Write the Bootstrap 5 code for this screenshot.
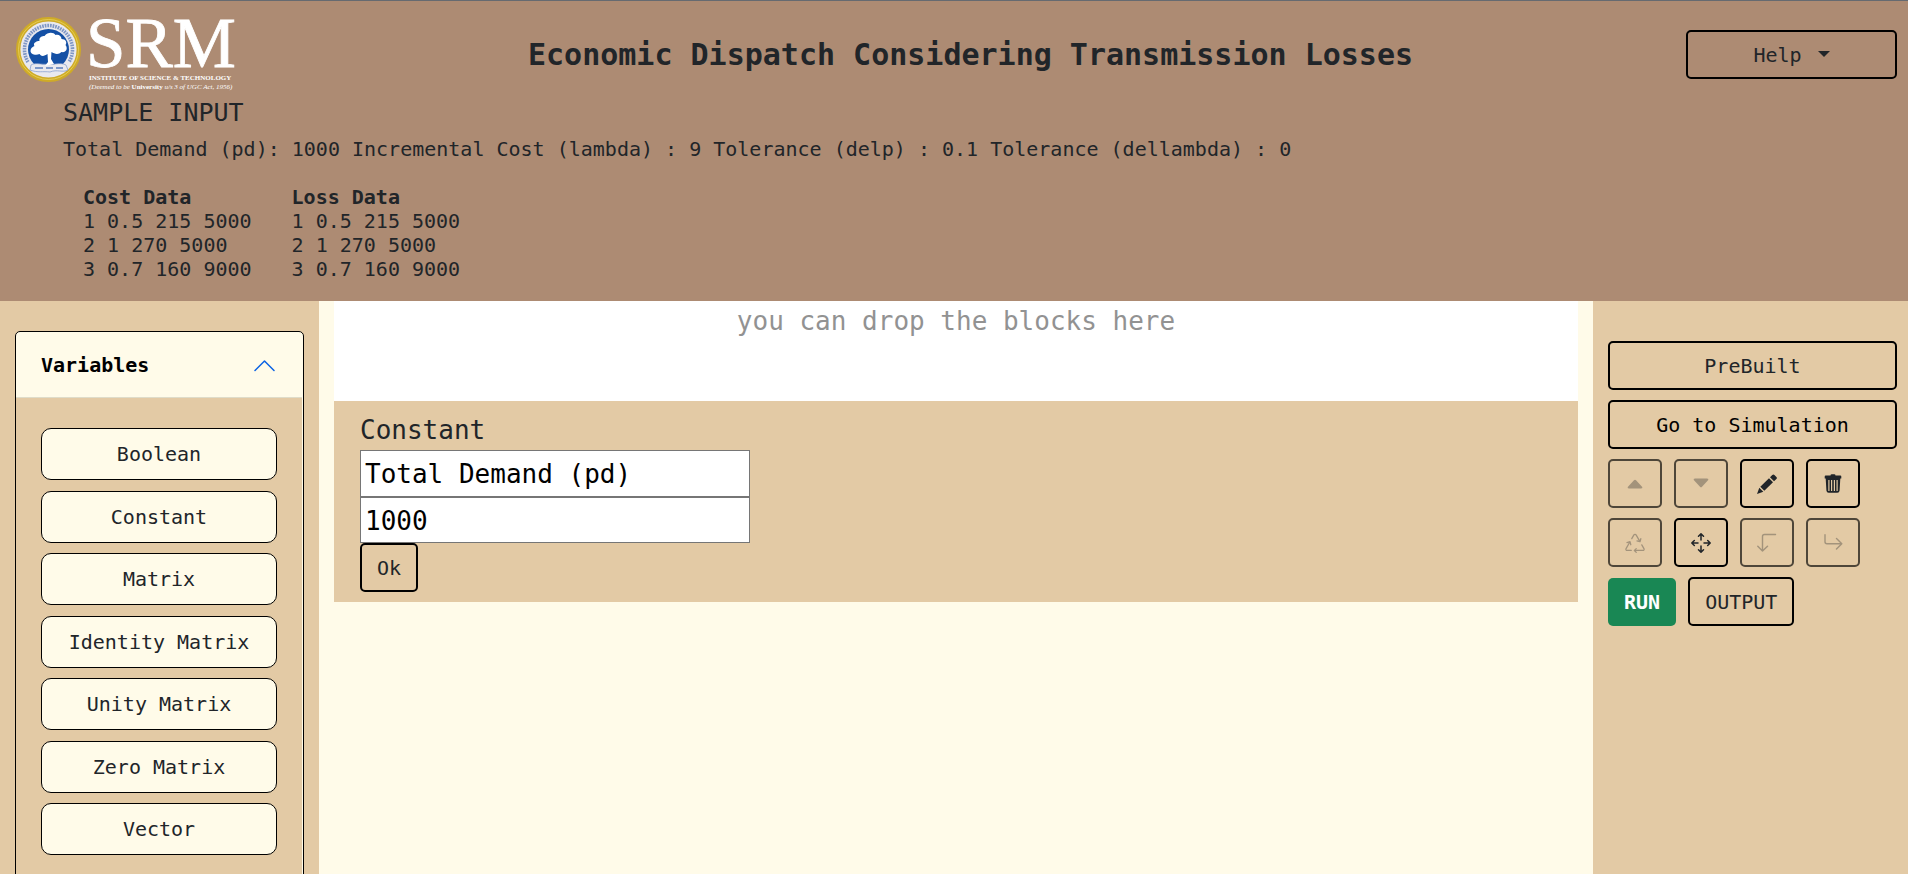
<!DOCTYPE html>
<html lang="en">
<head>
<meta charset="utf-8">
<meta name="viewport" content="width=device-width, initial-scale=1">
<title>Economic Dispatch Considering Transmission Losses</title>
<link href="https://cdn.jsdelivr.net/npm/bootstrap@5.3.0/dist/css/bootstrap.min.css" rel="stylesheet">
<style>
:root { --brown: #ad8b73; --sand: #e3caa5; --cream: #fffbe9; }
body { font-family: "DejaVu Sans Mono", monospace; font-size: 20px; line-height: 30px; background: var(--cream); }
.site-head { background: var(--brown); border-top: 1px solid #666a70; padding-bottom: 20px; }
.head-bar { padding: 15px 11px 0 15px; }
.brand-logo { width: 240px; height: 78px; flex: none; overflow: visible; }
.page-title { font-size: 30px; line-height: 36px; font-weight: 700; padding-top: 21px; }
.btn { --bs-btn-font-size: 20px; --bs-btn-line-height: 30px; --bs-btn-border-radius: 5px; padding: 8px 15px 7px; }
.btn-line { border: 2px solid #000; color: #212529; }
.btn-line:disabled { border-color: #000; color: #212529; opacity: .65; }
.btn-line:disabled svg { opacity: .5; }
.btn-line:hover { border-color: #000; background: var(--cream); }
.btn-run { border: 0; padding: 9px 16px; font-weight: 700; }
.btn-help { width: 211px; margin-top: 14px; }
.btn-help::after { margin-left: 16px; }
.btn-tool { width: 54px; height: 49px; padding: 0; }
.btn-tool svg { width: 20px; height: 20px; display: block; margin: auto; }
.tool-stack { gap: 10px; }
.tool-row { gap: 10px 12px; }
.sample { padding-left: 63px; line-height: 24px; }
.sample h2 { font-size: 25px; line-height: 30px; font-weight: 400; margin: 4px 0 9px; }
.sample p { margin: 0 0 24px; }
.sample th, .sample td { padding: 0 20px; }
.workspace { display: grid; grid-template-columns: 319px minmax(0, 1fr) 315px; }
.side-left { background: var(--sand); padding: 30px 15px 0; }
.side-right { background: var(--sand); padding: 40px 11px 0 15px; }
.var-box { border: 1px solid #000; border-radius: 5px; background: var(--cream); height: 100%; padding-right: 1px; }
.var-head { border: 0; border-bottom: 1px solid #dfdcc9; border-radius: 5px 5px 0 0; background: transparent; padding: 18px 25px 17px; font-weight: 700; color: #000; }
.var-list { background: var(--sand); padding: 30px 25px; min-height: 600px; }
.var-stack { min-height: 427px; }
.block-btn { height: 52px; flex: none; border: 1px solid #000; border-radius: 10px; background: var(--cream); color: #212529; }
.canvas { padding: 0 15px; }
.drop-zone { background: #fff; height: 100px; padding-top: 1px; font-size: 26px; line-height: 39px; color: #929292; }
.const-form { background: var(--sand); padding: 10px 26px; font-size: 26px; line-height: 39px; }
.const-form input { width: 390px; border: 1px solid #767676; padding: 4px 4px 3px; height: 47px; color: #000; background: #fff; }
.const-form input + input { height: 46px; }
</style>
</head>
<body class="vh-100 overflow-hidden d-flex flex-column">
<header class="site-head">
  <div class="head-bar d-flex align-items-start">
    <svg class="brand-logo" viewBox="15 16 240 78" role="img" aria-label="SRM Institute of Science and Technology">
      <circle cx="48.500" cy="49.500" r="31" fill="#e9e9ee"/>
      <circle cx="48.500" cy="49.500" r="30.300" fill="none" stroke="#cfab27" stroke-width="4.400"/>
      <circle cx="48.500" cy="49.500" r="30" fill="none" stroke="#ead460" stroke-width=".8"/>
      <path d="M28 62a24 24 0 1 1 41 0" fill="none" stroke="#7f97c6" stroke-width="3.600" stroke-dasharray="1.700 .9"/>
      <circle cx="48.500" cy="49.500" r="20.500" fill="#1450a5"/>
      <path d="M31 65c5-3 10 0 17-1 7 1 12-2 18 1l2 5c-5 3-11-1-18 2-7-1-12 1-20-2z" fill="#e9e9ee" stroke="#7d97c8" stroke-width=".7"/>
      <path d="M45 66l3-4-.5-8c-3 2-6 3-8 0-4 2-9 0-9-3s2-4 4-5c-2-3 2-5 5-5-1-4 3-5 5-5 3-4 9-4 11-1 3-1 6 1 6 4 4 0 6 3 4 6 3 4 0 8-4 7-3 3-7 2-10 0l-.5 7 3 5z" fill="#fff"/>
      <path d="M35 68h8m3 0h7m3 0h7" stroke="#5a7dbd" stroke-width="1.500"/>
      <g fill="#fff" font-family="Liberation Serif, serif">
        <text x="86" y="67" font-size="71" stroke="#fff" stroke-width=".8">SRM</text>
        <text x="89" y="80" font-size="7" font-weight="700">INSTITUTE OF SCIENCE &amp; TECHNOLOGY</text>
        <text x="89" y="89" font-size="7" font-style="italic">(Deemed to be <tspan font-weight="700" font-style="normal">University</tspan> u/s 3 of UGC Act, 1956)</text>
      </g>
    </svg>
    <h1 class="page-title flex-grow-1 text-center mb-0">Economic Dispatch Considering Transmission Losses</h1>
    <button class="btn btn-line btn-help dropdown-toggle" type="button" data-bs-toggle="dropdown">Help</button>
  </div>
  <section class="sample">
    <h2>SAMPLE INPUT</h2>
    <p>Total Demand (pd): 1000 Incremental Cost (lambda) : 9 Tolerance (delp) : 0.1 Tolerance (dellambda) : 0</p>
    <table>
      <thead><tr><th>Cost Data</th><th>Loss Data</th></tr></thead>
      <tbody>
        <tr><td>1 0.5 215 5000</td><td>1 0.5 215 5000</td></tr>
        <tr><td>2 1 270 5000</td><td>2 1 270 5000</td></tr>
        <tr><td>3 0.7 160 9000</td><td>3 0.7 160 9000</td></tr>
      </tbody>
    </table>
  </section>
</header>
<main class="workspace flex-grow-1 overflow-hidden">
  <aside class="side-left">
    <div class="var-box">
      <button class="var-head w-100 d-flex align-items-center justify-content-between" type="button" aria-expanded="true">Variables
        <svg width="25" height="25" viewBox="0 0 25 25" fill="none" stroke="#0c63e4" stroke-width="1.500" stroke-linecap="round" stroke-linejoin="round" aria-hidden="true"><path d="M3 17.500L12.500 8l9.500 9.500"/></svg>
      </button>
      <div class="var-list">
        <div class="var-stack d-flex flex-column justify-content-between">
          <button class="block-btn" type="button">Boolean</button>
          <button class="block-btn" type="button">Constant</button>
          <button class="block-btn" type="button">Matrix</button>
          <button class="block-btn" type="button">Identity Matrix</button>
          <button class="block-btn" type="button">Unity Matrix</button>
          <button class="block-btn" type="button">Zero Matrix</button>
          <button class="block-btn" type="button">Vector</button>
        </div>
      </div>
    </div>
  </aside>
  <section class="canvas">
    <div class="drop-zone text-center">you can drop the blocks here</div>
    <form class="const-form d-flex flex-column align-items-start">
      <label for="constName">Constant</label>
      <input id="constName" type="text" value="Total Demand (pd)">
      <input id="constValue" type="text" value="1000" aria-label="Value">
      <button class="btn btn-line" type="button">Ok</button>
    </form>
  </section>
  <aside class="side-right">
    <div class="tool-stack d-flex flex-column">
      <button class="btn btn-line" type="button">PreBuilt</button>
      <button class="btn btn-line text-black" type="button">Go to Simulation</button>
      <div class="tool-row d-flex flex-wrap">
        <button class="btn btn-line btn-tool" type="button" aria-label="Move up" disabled>
          <svg viewBox="0 0 20 20" fill="currentColor"><path d="M3 12.800L9 6.300q1-1.100 2 0l6 6.500q1 1.700-1 1.700H4q-2 0-1-1.700z"/></svg>
        </button>
        <button class="btn btn-line btn-tool" type="button" aria-label="Move down" disabled>
          <svg viewBox="0 0 20 20" fill="currentColor"><path d="M3 6.200l6 6.500q1 1.100 2 0l6-6.500q1-1.700-1-1.700H4q-2 0-1 1.700z"/></svg>
        </button>
        <button class="btn btn-line btn-tool" type="button" aria-label="Edit">
          <svg viewBox="0 0 20 20" fill="currentColor"><path d="M0 20l2.300-6.300 4 4zM3.300 12.700l8.700-8.500 4 4-8.700 8.500zM13 3.200L15.300 1q1.100-1 2.100 0l2 2q1 1 0 2.100L17 7.200z"/></svg>
        </button>
        <button class="btn btn-line btn-tool" type="button" aria-label="Delete">
          <svg viewBox="0 0 20 20" fill="currentColor" fill-rule="evenodd"><path d="M7.500 1.500q0-1.300 1.300-1.300h2.400q1.300 0 1.300 1.300h4.800q1 0 1 1v2h-1l-.7 12q-.2 2.300-2.300 2.300H5.700q-2.100 0-2.300-2.300l-.7-12h-1v-2q0-1 1-1zM5.300 6v11h1.200V6zm2.700 0v11h1.200V6zm2.800 0v11H12V6zm2.700 0v11h1.200V6z"/></svg>
        </button>
      </div>
      <div class="tool-row d-flex flex-wrap">
        <button class="btn btn-line btn-tool" type="button" aria-label="Recycle" disabled>
          <svg viewBox="0 0 16 16" fill="currentColor"><path d="M9.302 1.256a1.500 1.500 0 0 0-2.604 0l-1.704 2.980a.5.5 0 0 0 .869.497l1.703-2.981a.5.5 0 0 1 .868 0l2.540 4.444-1.256-.337a.5.5 0 1 0-.26.966l2.415.647a.5.5 0 0 0 .613-.353l.647-2.415a.5.5 0 1 0-.966-.259l-.333 1.242-2.532-4.431zM2.973 7.773l-1.255.337a.5.5 0 1 1-.26-.966l2.416-.647a.5.5 0 0 1 .612.353l.647 2.415a.5.5 0 0 1-.966.259l-.333-1.242-2.545 4.454a.5.5 0 0 0 .434.748H5a.5.5 0 0 1 0 1H1.723A1.500 1.500 0 0 1 .421 12.240l2.552-4.467zm10.890 1.463a.5.5 0 1 0-.868.496l1.716 3.004a.5.5 0 0 1-.434.748h-5.570l.647-.646a.5.5 0 1 0-.708-.707l-1.500 1.500a.498.498 0 0 0 0 .707l1.500 1.500a.5.5 0 1 0 .708-.707l-.647-.647h5.570a1.500 1.500 0 0 0 1.302-2.244l-1.716-3.004z"/></svg>
        </button>
        <button class="btn btn-line btn-tool" type="button" aria-label="Move">
          <svg viewBox="0 0 20 20" fill="none" stroke="currentColor" stroke-width="1.500" stroke-linecap="round" stroke-linejoin="round"><path d="M10 7V1M7.500 3.300L10 .8l2.500 2.500M10 13v6M7.500 16.700l2.500 2.500 2.500-2.500M7 10H1M3.300 7.500L.8 10l2.500 2.500M13 10h6M16.700 7.500l2.500 2.500-2.500 2.500"/></svg>
        </button>
        <button class="btn btn-line btn-tool" type="button" aria-label="Undo" disabled>
          <svg viewBox="0 0 20 20" fill="none" stroke="currentColor" stroke-width="1.400" stroke-linecap="round" stroke-linejoin="round"><path d="M18.500 1.500H7.500q-2 0-2 2V18M.8 13.200L5.500 18l5-4.800"/></svg>
        </button>
        <button class="btn btn-line btn-tool" type="button" aria-label="Redo" disabled>
          <svg viewBox="0 0 20 20" fill="none" stroke="currentColor" stroke-width="1.400" stroke-linecap="round" stroke-linejoin="round"><path d="M2 1.800v7q0 2 2 2h14.800M13.500 5.500l5.300 5.300-5.300 5.300"/></svg>
        </button>
      </div>
      <div class="tool-row d-flex flex-wrap align-items-end">
        <button class="btn btn-success btn-run" type="button">RUN</button>
        <button class="btn btn-line" type="button">OUTPUT</button>
      </div>
    </div>
  </aside>
</main>
<script src="https://cdn.jsdelivr.net/npm/bootstrap@5.3.0/dist/js/bootstrap.bundle.min.js"></script>
</body>
</html>
